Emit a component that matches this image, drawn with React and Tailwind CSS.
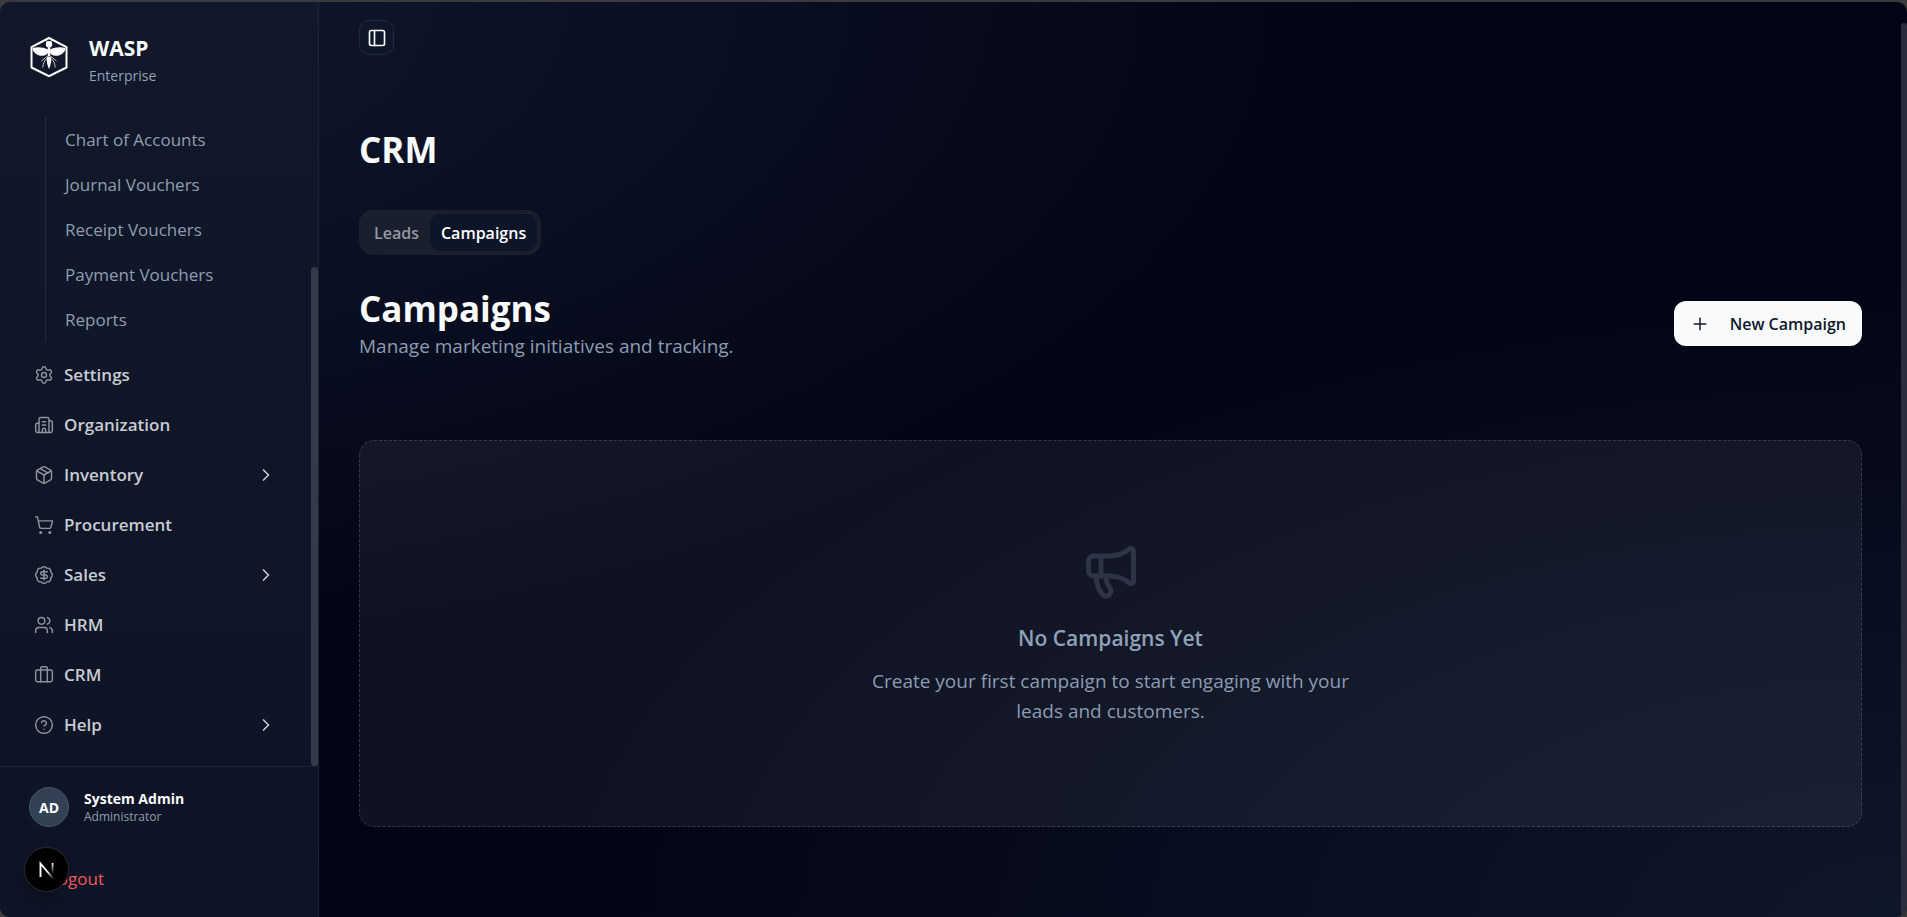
import React, { useState } from 'react';
import {
  PanelLeft, Settings, Building2, Package, ShoppingCart, BadgeDollarSign,
  Users, Briefcase, CircleHelp, ChevronRight, Plus, Megaphone,
} from 'lucide-react';

const accountLinks = ['Chart of Accounts', 'Journal Vouchers', 'Receipt Vouchers', 'Payment Vouchers', 'Reports'];

const navItems = [
  { label: 'Settings', icon: Settings },
  { label: 'Organization', icon: Building2 },
  { label: 'Inventory', icon: Package, expandable: true },
  { label: 'Procurement', icon: ShoppingCart },
  { label: 'Sales', icon: BadgeDollarSign, expandable: true },
  { label: 'HRM', icon: Users },
  { label: 'CRM', icon: Briefcase },
  { label: 'Help', icon: CircleHelp, expandable: true },
];

const tabs = ['Leads', 'Campaigns'];

const WaspLogo = () => (
  <svg viewBox="0 0 40 40" className="size-10 text-white" fill="none" stroke="currentColor" aria-hidden="true">
    <path d="M20 1 37.5 10.200V30.500L20 39.200 2.500 30.500V10.200Z" strokeWidth="2" strokeLinejoin="round" />
    <circle cx="20" cy="7.200" r="3.200" fill="currentColor" stroke="none" />
    <path d="M18.500 4.500 15.800 2.800M21.500 4.500l2.700-1.700" strokeWidth="1" />
    <path d="M19 12.500C14 10 8 9.800 3.500 11c.5 5 5 8 10 7.800 3-.2 5-1.600 5.500-3.600ZM21 12.500c5-2.500 11-2.700 15.500-1.500-.5 5-5 8-10 7.800-3-.2-5-1.600-5.500-3.600Z" fill="currentColor" stroke="none" />
    <path d="M20 10v9" strokeWidth="2.500" />
    <path d="M18 19.500h4c1 4-.4 9-2 12.500-1.600-3.500-3-8.500-2-12.500Z" fill="currentColor" stroke="none" />
    <path d="M18 19.500 12.500 24M22 19.500l5.500 4.500M18 21.500c-2.500 2-4 5-4.200 9M22 21.500c2.500 2 4 5 4.200 9" strokeWidth="1" opacity=".75" />
  </svg>
);

const Sidebar = () => (
  <aside className="relative flex w-[319px] shrink-0 flex-col border-r border-[#1c2333] bg-linear-to-b from-[#111829] to-[#0e1425]">
    <div className="flex h-[115px] items-start gap-5 pl-[29px] pt-[30px]">
      <div className="pt-[5px]">
        <WaspLogo />
      </div>
      <div>
        <p className="text-[21px] leading-8 font-bold text-slate-50">WASP</p>
        <p className="text-[14px] leading-6 text-slate-400">Enterprise</p>
      </div>
    </div>

    <nav className="flex-1 pr-8">
      <ul className="ml-[45px] border-l border-[#252b3b] pl-[19px]">
        {accountLinks.map((label) => (
          <li key={label}>
            <a href="#" className="flex h-[45px] items-center text-[17px] text-[#8f9db2]">{label}</a>
          </li>
        ))}
      </ul>
      <ul className="mt-2 pl-[34px]">
        {navItems.map(({ label, icon: Icon, expandable }) => (
          <li key={label}>
            <a href="#" className="flex h-[50px] items-center gap-[10px] pr-[10px] text-[17px] font-semibold text-[#c8cbd2]">
              <Icon size={20} strokeWidth={1.75} className="shrink-0 text-[#8d929d]" />
              <span className="flex-1">{label}</span>
              {expandable && <ChevronRight size={20} className="shrink-0" />}
            </a>
          </li>
        ))}
      </ul>
    </nav>

    <div className="h-[151px] border-t border-[#1c2333] pl-[29px] pt-5">
      <div className="flex items-center gap-[15px]">
        <div className="flex size-10 items-center justify-center rounded-full border border-[#475569] bg-[#334155] text-[14px] font-bold text-white">AD</div>
        <div>
          <p className="text-[14px] leading-5 font-bold text-slate-50">System Admin</p>
          <p className="text-[12px] leading-4 text-[#8f9db2]">Administrator</p>
        </div>
      </div>
      <button type="button" className="ml-5 mt-8 flex h-10 items-center text-[17px] text-[#f05a60]">Logout</button>
    </div>

    <div className="absolute right-0 top-[265px] h-[499px] w-[7px] rounded-full bg-[#343a4a]" />

    <button type="button" aria-label="Open dev tools" className="absolute bottom-[25px] left-6 flex size-[45px] items-center justify-center rounded-full border border-[#2b2b2d] bg-black shadow-lg">
      <svg viewBox="0 0 20 20" className="size-5" fill="none">
        <defs>
          <linearGradient id="diagonal" x1="11" y1="11" x2="17" y2="19" gradientUnits="userSpaceOnUse">
            <stop stopColor="#fff" />
            <stop offset="1" stopColor="#fff" stopOpacity="0" />
          </linearGradient>
          <linearGradient id="stem" x1="0" y1="3" x2="0" y2="14" gradientUnits="userSpaceOnUse">
            <stop stopColor="#fff" />
            <stop offset="1" stopColor="#fff" stopOpacity="0" />
          </linearGradient>
        </defs>
        <path d="M3.500 17V3.500L16.500 19" stroke="url(#diagonal)" strokeWidth="1.900" />
        <rect x="14.700" y="3" width="1.700" height="11" fill="url(#stem)" />
      </svg>
    </button>
  </aside>
);

const App = () => {
  const [activeTab, setActiveTab] = useState('Campaigns');

  return (
    <div className="min-h-screen bg-[#3b3b3b] pt-[2px] font-['Open_Sans','Noto_Sans',sans-serif]">
      <div className="relative flex min-h-[calc(100vh-2px)] overflow-hidden rounded-[10px] bg-[#020515] bg-[radial-gradient(at_0%_0%,#121a2e_0%,transparent_50%),radial-gradient(at_100%_100%,#0f172a_0%,transparent_50%)]">
        <Sidebar />

        <main className="min-w-0 flex-1 pb-[90px] pl-10 pr-[45px] pt-[18px]">
          <button type="button" aria-label="Toggle sidebar" className="flex size-[35px] items-center justify-center rounded-[10px] border border-[#222a3b] bg-[#0e162a] text-slate-50">
            <PanelLeft size={20} />
          </button>

          <h1 className="mt-[72px] text-[35px] leading-[45px] font-bold text-slate-50">CRM</h1>

          <div role="tablist" className="mt-[38px] inline-flex h-[45px] items-center rounded-[14px] bg-[#1a1f2e] p-1">
            {tabs.map((tab) => (
              <button
                key={tab}
                type="button"
                role="tab"
                aria-selected={activeTab === tab}
                onClick={() => setActiveTab(tab)}
                className={`h-full rounded-[11px] px-[11px] text-[16px] font-semibold ${
                  activeTab === tab ? 'bg-[#0d1629] text-white' : 'text-[#9598a1]'
                }`}
              >
                {tab}
              </button>
            ))}
          </div>

          <div className="mt-[31px] flex items-center justify-between">
            <div>
              <h2 className="text-[35px] leading-[45px] font-bold text-slate-50">Campaigns</h2>
              <p className="text-[19px] leading-[30px] text-[#8b9bb3]">Manage marketing initiatives and tracking.</p>
            </div>
            <button type="button" className="flex h-[45px] items-center rounded-xl bg-slate-50 px-4 text-[16px] font-semibold text-slate-900">
              <Plus size={20} className="mr-5" strokeWidth={1.75} /> New Campaign
            </button>
          </div>

          <section className="mt-[79px] flex flex-col items-center rounded-[15px] border border-dashed border-white/15 bg-[#f0f0ff]/6 py-[100px] text-center">
            <Megaphone size={60} className="text-[#2d3445]" />
            <h3 className="mt-5 text-[21px] leading-[35px] font-semibold text-slate-400">No Campaigns Yet</h3>
            <p className="mt-[10px] max-w-[490px] text-[19px] leading-[30px] text-[#8b9bb3]">
              Create your first campaign to start engaging with your leads and customers.
            </p>
          </section>
        </main>

        <div className="absolute bottom-0 right-0 top-[21px] w-[6px] rounded-t-full bg-[#2a2d3b]" />
      </div>
    </div>
  );
};

export default App;
